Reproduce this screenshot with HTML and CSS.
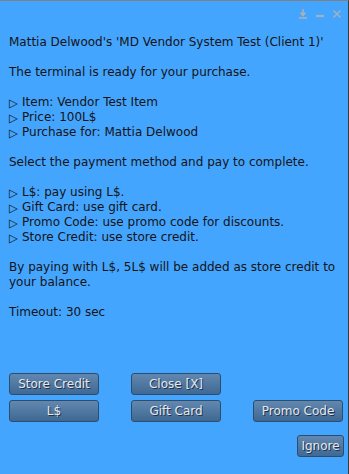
FILE: index.html
```html
<!DOCTYPE html>
<html>
<head>
<meta charset="utf-8">
<link rel="stylesheet" href="styles.css">
</head>
<body>
<div class="panel">
  <div class="titlebar">
    <svg class="icon" width="10" height="10" viewBox="0 0 10 10"><path d="M5 0v6M2.5 3.5L5 6.5 7.5 3.5" stroke="#a8b0b8" stroke-width="1.6" fill="none"/><rect x="1" y="8.2" width="8" height="1.6" fill="#a8b0b8"/></svg>
    <svg class="icon" width="10" height="10" viewBox="0 0 10 10"><rect x="1" y="6" width="8" height="2" fill="#a8b0b8"/></svg>
    <svg class="icon" width="10" height="10" viewBox="0 0 10 10"><path d="M1.5 1.5L8.5 8.5M8.5 1.5L1.5 8.5" stroke="#a8b0b8" stroke-width="1.4"/></svg>
  </div>
  <div class="message">
    <p>Mattia Delwood's 'MD Vendor System Test (Client 1)'</p>
    <p>The terminal is ready for your purchase.</p>
    <p><span class="tri">▷</span>Item: Vendor Test Item<br><span class="tri">▷</span>Price: 100L$<br><span class="tri">▷</span>Purchase for: Mattia Delwood</p>
    <p>Select the payment method and pay to complete.</p>
    <p><span class="tri">▷</span>L$: pay using L$.<br><span class="tri">▷</span>Gift Card: use gift card.<br><span class="tri">▷</span>Promo Code: use promo code for discounts.<br><span class="tri">▷</span>Store Credit: use store credit.</p>
    <p>By paying with L$, 5L$ will be added as store credit to your balance.</p>
    <p>Timeout: 30 sec</p>
  </div>
  <div class="buttons">
    <button class="btn">Store Credit</button>
    <button class="btn">Close [X]</button>
    <span></span>
    <button class="btn">L$</button>
    <button class="btn">Gift Card</button>
    <button class="btn">Promo Code</button>
  </div>
  <div class="ignore-row">
    <button class="btn small">Ignore</button>
  </div>
</div>
</body>
</html>
```
FILE: styles.css
```css
html, body {
  margin: 0;
  padding: 0;
}
body {
  width: 349px;
  height: 474px;
  overflow: hidden;
  font-family: "DejaVu Sans", sans-serif;
}
.panel {
  box-sizing: border-box;
  width: 349px;
  height: 474px;
  background: #44a5ff;
  border-top: 1px solid #808080;
  border-right: 1px solid #3a3a3a;
  display: flex;
  flex-direction: column;
}
.titlebar {
  height: 33px;
  display: flex;
  justify-content: flex-end;
  align-items: flex-start;
  gap: 7px;
  padding: 8px 6px 0 0;
  box-sizing: border-box;
}
.icon {
  display: block;
}
.message {
  padding: 1px 8px 0 9px;
  color: #141414;
  font-size: 12px;
  line-height: 15px;
}
.message p {
  margin: 0 0 15px 0;
}
.tri {
  display: inline-block;
  width: 13px;
  font-size: 11.5px;
  line-height: 10px;
  vertical-align: -1px;
}
.buttons {
  margin-top: auto;
  padding-left: 9px;
  display: grid;
  grid-template-columns: 90px 90px 90px;
  column-gap: 32px;
  row-gap: 5px;
}
.btn {
  box-sizing: border-box;
  height: 22px;
  width: 90px;
  padding: 0;
  border: 1px solid #2b4d70;
  border-radius: 3px;
  background: linear-gradient(#6288b0, #3f6892);
  color: #e6e8ea;
  font-family: "DejaVu Sans", sans-serif;
  font-size: 12px;
  text-shadow: 1px 1px 0 #1c3250;
}
.ignore-row {
  display: flex;
  justify-content: flex-end;
  padding: 13px 4px 17px 0;
}
.btn.small {
  width: 47px;
}
```
